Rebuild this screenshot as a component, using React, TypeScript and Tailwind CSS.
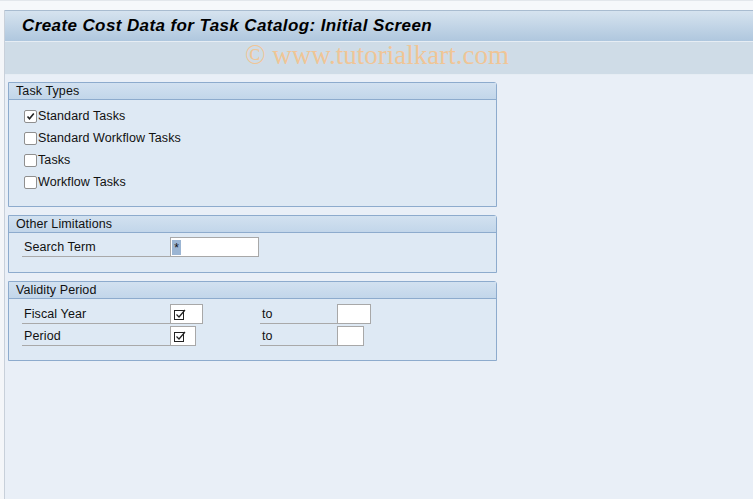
import React from "react";

const font = { fontFamily: '"Liberation Sans", Arial, sans-serif' };

function Check({ checked }: { checked?: boolean }) {
  return (
    <span className="w-[13px] h-[13px] border border-[#8f8f8f] rounded-[2px] bg-white flex items-center justify-center shrink-0">
      {checked && (
        <svg width="9" height="9" viewBox="0 0 9 9">
          <path d="M1.5 4.5 L3.5 6.8 L7.8 1.5" stroke="#222" strokeWidth="1.6" fill="none" />
        </svg>
      )}
    </span>
  );
}

function BoxTick() {
  return (
    <svg width="12" height="11" viewBox="0 0 12 11" className="shrink-0">
      <rect x="0.5" y="1.5" width="9" height="9" fill="none" stroke="#222" strokeWidth="1" />
      <path d="M2.5 5.5 L5 8 L11 1" stroke="#222" strokeWidth="1.2" fill="none" />
    </svg>
  );
}

function Group({ title, children, h }: { title: string; children: React.ReactNode; h: string }) {
  return (
    <div className={`w-[489px] ${h} border border-[#8dabcd] rounded-tr-[3px] bg-[#dee9f4] flex flex-col`}>
      <div className="h-[17px] bg-gradient-to-b from-[#d2e1f0] to-[#c2d6ea] border-b border-[#8dabcd] pl-[7px] text-[12.5px] leading-[17px] text-[#111] tracking-[0.1px]">
        {title}
      </div>
      {children}
    </div>
  );
}

export default function App() {
  return (
    <div className="w-[753px] h-[499px] bg-[#f4f6f9] flex flex-col text-[#111] overflow-hidden" style={font}>
      <div className="h-[10px] bg-[#f6f8fb] border-t border-[#e3e7ec]" />
      <div className="flex-1 flex flex-col ml-[4px] border-l border-[#c8d0da]">
        <div className="h-[31px] bg-gradient-to-b from-[#d6e3ef] to-[#afc7de] border-t border-[#a9bcd0] flex items-center pl-[17px]">
          <span className="text-[17px] font-bold italic tracking-[0.4px] text-black">
            Create Cost Data for Task Catalog: Initial Screen
          </span>
        </div>
        <div className="h-[34px] bg-[#cfdce7] border-t border-[#e6edf4] border-b border-[#9fb0c4] flex items-center justify-center pr-[10px]">
          <span
            className="text-[27px] leading-[30px] text-[#f0c596] -mt-[6px] ml-[6px]"
            style={{ fontFamily: '"Liberation Serif", "Times New Roman", serif' }}
          >
            © www.tutorialkart.com
          </span>
        </div>
        <div className="flex-1 bg-[#e9eff7] pl-[3px] pt-[7px] flex flex-col gap-[8px]">
          <Group title="Task Types" h="h-[125px]">
            <div className="pl-[15px] pt-[5px] flex flex-col">
              {[
                ["Standard Tasks", true],
                ["Standard Workflow Tasks", false],
                ["Tasks", false],
                ["Workflow Tasks", false],
              ].map(([label, c]) => (
                <div key={label as string} className="h-[22px] flex items-center gap-[1px] text-[12.5px] tracking-[0.1px]">
                  <Check checked={c as boolean} />
                  <span>{label as string}</span>
                </div>
              ))}
            </div>
          </Group>
          <Group title="Other Limitations" h="h-[58px]">
            <div className="pl-[13px] pt-[4px] flex items-end">
              <div className="w-[148px] h-[20px] border-b border-[#a9a9a9] text-[12.5px] leading-[20px] pl-[2px] tracking-[0.1px]">
                Search Term
              </div>
              <div className="w-[89px] h-[20px] border border-[#a8a8a8] bg-white flex items-center pl-[1px]">
                <span className="bg-[#9bb5d3] h-[15px] w-[9px] text-[12px] leading-[17px] text-center">*</span>
              </div>
            </div>
          </Group>
          <Group title="Validity Period" h="h-[80px]">
            <div className="pl-[13px] pt-[5px] flex flex-col gap-[2px]">
              {[
                ["Fiscal Year", "w-[33px]", "w-[34px]"],
                ["Period", "w-[26px]", "w-[27px]"],
              ].map(([label, w1, w2]) => (
                <div key={label} className="flex items-end">
                  <div className="w-[148px] h-[20px] border-b border-[#a9a9a9] text-[12.5px] leading-[20px] pl-[2px] tracking-[0.1px]">
                    {label}
                  </div>
                  <div className="w-[90px] flex">
                    <div className={`${w1} h-[20px] border border-[#a8a8a8] bg-white flex items-center pl-[3px]`}>
                      <BoxTick />
                    </div>
                  </div>
                  <div className="w-[77px] h-[20px] border-b border-[#a9a9a9] text-[12.5px] leading-[20px] pl-[2px]">
                    to
                  </div>
                  <div className={`${w2} h-[20px] border border-[#a8a8a8] bg-white`} />
                </div>
              ))}
            </div>
          </Group>
        </div>
      </div>
    </div>
  );
}
